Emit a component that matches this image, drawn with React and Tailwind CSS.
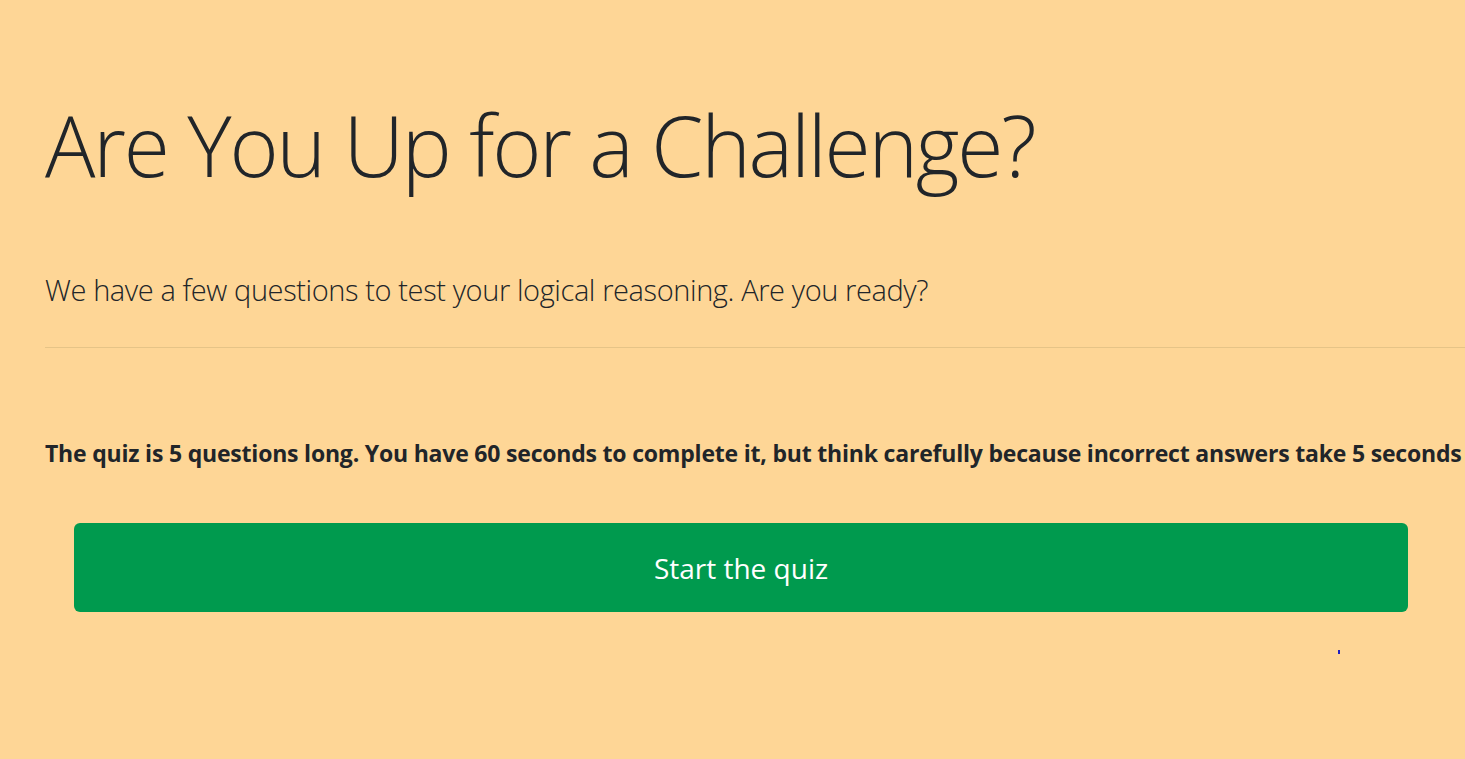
export default function App() {
  return (
    <div className="min-h-screen w-full overflow-hidden bg-[#fed696] text-[#212529] font-['Open_Sans',sans-serif]">
      <div className="pl-[45px] pt-[90px]">
        <h1 className="m-0 h-[110px] text-[84px] font-light leading-[110px] whitespace-nowrap tracking-[-2.2px]">
          Are You Up for a Challenge?
        </h1>
        <p className="mt-[70px] text-[29px] font-light leading-[40px] whitespace-nowrap tracking-[-0.4px]">
          We have a few questions to test your logical reasoning. Are you ready?
        </p>
        <hr className="mt-[37px] border-0 border-t border-[#e6c487]" />
        <p className="mt-[87px] text-[23px] font-bold leading-[36px] whitespace-nowrap tracking-[-0.2px]">
          The quiz is 5 questions long. You have 60 seconds to complete it, but think carefully because incorrect answers take 5 seconds
        </p>
      </div>
      <div className="pl-[74px] pr-[57px] pt-[52px]">
        <button className="flex h-[89px] w-full items-center justify-center rounded-[6px] bg-[#009a4e] text-[28px] text-white">
          Start the quiz
        </button>
        <div className="relative h-[100px]">
          <span className="absolute left-[1264px] top-[38px] h-[4px] w-[2px] bg-[#2020c0]" />
        </div>
      </div>
    </div>
  );
}
